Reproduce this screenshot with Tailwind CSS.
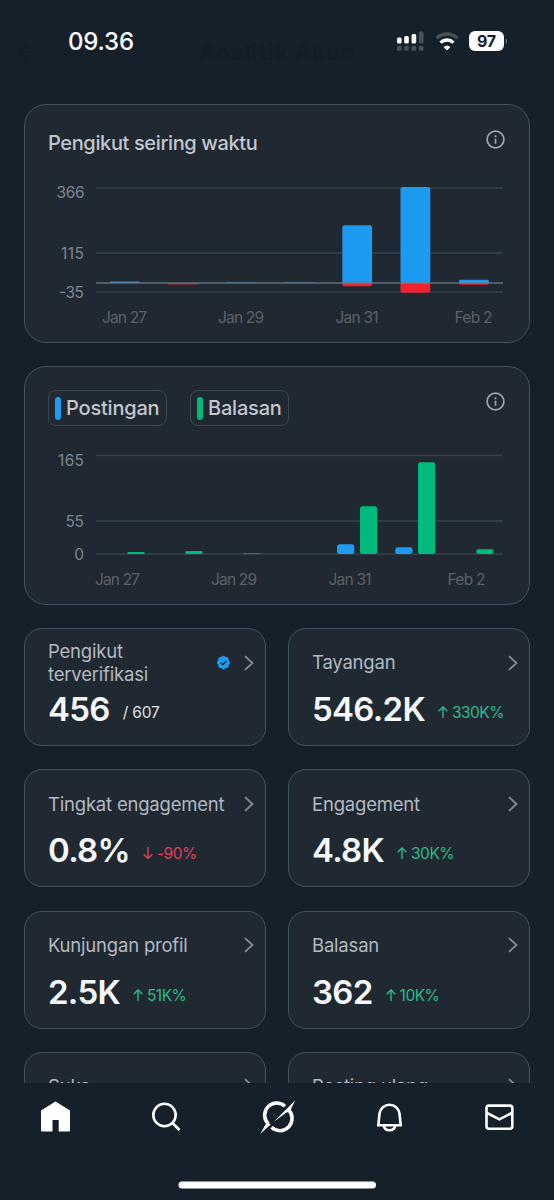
<!DOCTYPE html>
<html lang="id">
<head>
    <meta charset="UTF-8">
    <meta name="viewport" content="width=device-width, initial-scale=1.0">
    <title>Analitik Akun</title>
    <script src="https://cdn.jsdelivr.net/npm/@tailwindcss/browser@4"></script>
</head>
<body class="bg-[#16202a] font-['Inter',sans-serif] text-[#c2c7ce]">
    <div class="h-[1200px] w-[554px] overflow-hidden flex flex-col">
        <!-- Status bar -->
        <header class="relative h-[104px] shrink-0 flex items-start justify-between pl-[68px] pr-[46px] pt-[27px]">
            <svg class="absolute left-[17px] top-[42px]" width="22" height="20" viewBox="0 0 22 20" fill="none" stroke="#141d26" stroke-width="2"><path d="M10 2 2 10l8 8M2 10h18"/></svg>
            <div class="absolute left-[199px] top-[37px] text-[22px] leading-[30px] tracking-[1px] font-bold text-[#141d26]">Analitik Akun</div>
            <div class="relative text-[24px] leading-[30px] font-medium text-white tracking-[-0.2px]">09.36</div>
            <svg class="mt-[3px]" width="112" height="24" viewBox="396 30 112 24">
                <g fill="#fff">
                    <rect x="397" y="37.500" width="4.600" height="6" rx="1.500"/>
                    <rect x="404.200" y="36" width="4.600" height="7.500" rx="1.500"/>
                    <rect x="411.600" y="34" width="4.600" height="9.500" rx="1.500"/>
                </g>
                <g fill="#46505a">
                    <rect x="418.900" y="31.500" width="4.600" height="12" rx="1.500"/>
                    <rect x="397" y="45.800" width="4.600" height="5" rx="1.500"/>
                    <rect x="404.200" y="45.800" width="4.600" height="5" rx="1.500"/>
                    <rect x="411.600" y="45.800" width="4.600" height="5" rx="1.500"/>
                    <rect x="418.900" y="45.800" width="4.600" height="5" rx="1.500"/>
                </g>
                <g fill="none" stroke-width="3.300">
                    <path d="M436.600 38.200a15 15 0 0 1 20.800 0" stroke="#46505a"/>
                    <path d="M440.500 42.600a9.400 9.400 0 0 1 13 0" stroke="#fff"/>
                </g>
                <path d="M443.600 47.100a5 5 0 0 1 6.800 0L447 50.600z" fill="#fff"/>
                <rect x="469" y="31" width="35" height="20" rx="6" fill="#fff"/>
                <path d="M505.500 38.300c2.200.8 2.200 5.200 0 6z" fill="#5d666f"/>
                <text x="486.500" y="46.800" text-anchor="middle" font-size="16" font-weight="700" fill="#16202a" textLength="19">97</text>
            </svg>
        </header>

        <main class="px-6 flex-1 min-h-0 overflow-hidden flex flex-col gap-[23px]">
            <section class="h-[239px] shrink-0 rounded-[22px] border-[1.5px] border-[#43525f] bg-[#202832]">
                <div class="h-[65px] pl-[23px] pr-6 pt-[23px] flex items-start justify-between">
                    <h2 class="text-[20px] leading-[30px] font-medium tracking-[-0.37px]">Pengikut seiring waktu</h2>
                    <svg class="mt-[2px]" width="19" height="19" viewBox="0 0 19 19" fill="none" stroke="#9ea6af"><circle cx="9.500" cy="9.500" r="8.400" stroke-width="1.700"/><path d="M9.500 8.800v5M9.500 5.300v2" stroke-width="1.700"/></svg>
                </div>
                <svg class="block" width="504" height="172" viewBox="25 170 504 172" font-size="15.500">
                    <path d="M96 188H503M96 253H503M96 292H503" stroke="#35424f" stroke-width="1.600"/>
                    <g fill="#1d9bf0">
                        <rect x="342.300" y="225.200" width="29.800" height="58" rx="2.500"/>
                        <rect x="400.500" y="187" width="29.800" height="96" rx="2.500"/>
                        <rect x="459" y="279.700" width="29.800" height="4" rx="1.500"/>
                        <path d="M110 281.300h29.500v1.700H110z" opacity=".75"/>
                        <path d="M226 281.700h29.500v1H226zM284.500 281.700H314v1h-29.500z" opacity=".45"/>
                    </g>
                    <g fill="#f4212e">
                        <path d="M342.300 283h29.800v1.300a2 2 0 0 1-2 2h-25.800a2 2 0 0 1-2-2zM400.500 283h29.800v7.300a2.500 2.500 0 0 1-2.500 2.500H403a2.500 2.500 0 0 1-2.500-2.500zM459 283h29.800l-1 1.700h-27.800z"/>
                        <path d="M168 283h29.500v1.600H168z" opacity=".6"/>
                    </g>
                    <path d="M96 283H503" stroke="#71808e" stroke-width="1.600" opacity=".8"/>
                    <g fill="#7e8791" text-anchor="end">
                        <text x="84.500" y="198" textLength="28">366</text>
                        <text x="84" y="259" textLength="23">115</text>
                        <text x="84" y="298" textLength="25">-35</text>
                    </g>
                    <g fill="#5d6166" text-anchor="middle">
                        <text x="124.500" y="323" textLength="45">Jan 27</text>
                        <text x="241" y="323" textLength="46">Jan 29</text>
                        <text x="357" y="323" textLength="43">Jan 31</text>
                        <text x="473.500" y="323" textLength="38">Feb 2</text>
                    </g>
                </svg>
            </section>

            <section class="h-[239px] shrink-0 rounded-[22px] border-[1.5px] border-[#43525f] bg-[#202832]">
                <div class="h-[65px] pl-[23px] pr-6 pt-[23px] flex items-start gap-[23px] text-[20px] font-medium">
                    <div class="h-9 w-[119px] rounded-lg border border-[#3a4653] flex items-center gap-[5px] pl-[6px] tracking-[-0.2px]"><span class="h-[23px] w-[6px] rounded-full bg-[#1d9bf0]"></span>Postingan</div>
                    <div class="h-9 w-[99px] rounded-lg border border-[#3a4653] flex items-center gap-[5px] pl-[6px] tracking-[-0.2px]"><span class="h-[23px] w-[6px] rounded-full bg-[#00ba7c]"></span>Balasan</div>
                    <svg class="ml-auto mt-[2px]" width="19" height="19" viewBox="0 0 19 19" fill="none" stroke="#9ea6af"><circle cx="9.500" cy="9.500" r="8.400" stroke-width="1.700"/><path d="M9.500 8.800v5M9.500 5.300v2" stroke-width="1.700"/></svg>
                </div>
                <svg class="block" width="504" height="172" viewBox="25 432 504 172" font-size="15.500">
                    <path d="M96 455.500H503M96 521H503M96 554H503" stroke="#35424f" stroke-width="1.600"/>
                    <g fill="#1d9bf0">
                        <rect x="337" y="544.300" width="17.300" height="9.700" rx="2.500"/>
                        <rect x="395.300" y="547.300" width="17.300" height="6.700" rx="2.500"/>
                    </g>
                    <g fill="#00ba7c">
                        <rect x="360" y="506.200" width="17.300" height="47.800" rx="2.500"/>
                        <rect x="418" y="462.300" width="17.300" height="91.700" rx="2.500"/>
                        <rect x="476.300" y="549.200" width="17.300" height="4.800" rx="2"/>
                        <rect x="127.300" y="552" width="17.300" height="2" rx="1"/>
                        <rect x="185.300" y="551" width="17.300" height="3" rx="1.200"/>
                        <rect x="243.500" y="553" width="17.300" height="1" opacity=".6"/>
                    </g>
                    <g fill="#7e8791" text-anchor="end">
                        <text x="84" y="466" textLength="26">165</text>
                        <text x="84" y="527" textLength="18.500">55</text>
                        <text x="84" y="560">0</text>
                    </g>
                    <g fill="#5d6166" text-anchor="middle">
                        <text x="117.500" y="585" textLength="45">Jan 27</text>
                        <text x="234" y="585" textLength="46">Jan 29</text>
                        <text x="350" y="585" textLength="43">Jan 31</text>
                        <text x="466.500" y="585" textLength="38">Feb 2</text>
                    </g>
                </svg>
            </section>

            <!-- Metric cards -->
            <div id="metrics" class="grid grid-cols-2 gap-x-[22px] gap-y-[23.3px]"></div>
        </main>

        <nav class="h-[117px] shrink-0 bg-[#16202a]">
            <svg width="554" height="117" viewBox="0 1083 554 117" fill="none" stroke="#fff" stroke-width="2.600">
                <path d="M55.500 1101.500 70 1110.500V1130.500a1 1 0 0 1-1 1H58.700V1120h-6.200v11.500H42a1 1 0 0 1-1-1V1110.500z" fill="#fff" stroke="none"/>
                <circle cx="164.500" cy="1115" r="11.200"/>
                <path d="m172.500 1123 7 7"/>
                <g stroke-width="3.500">
                    <path d="M285 1106.300A12 12 0 0 0 268.500 1124"/>
                    <path d="M271.500 1127.300A12.200 12.200 0 0 0 288.500 1109.800"/>
                </g>
                <path d="M260.300 1133.800 266.800 1122.300l4 2.200zM273.800 1121.800 295.300 1100.200 289.800 1111.600 286.500 1112.400z" fill="#fff" stroke="none"/>
                <path d="M378.300 1125.300 379.500 1113.500a10.100 10.100 0 0 1 20 0L400.700 1125.300z"/>
                <path d="M383.700 1125.500a5.900 5.900 0 0 0 11.600 0"/>
                <rect x="486.500" y="1105.600" width="25.800" height="23.200" rx="2.500"/>
                <path d="m487 1113 12.400 6.300 12.400-6.300"/>
                <rect x="178.500" y="1181.500" width="197.500" height="7" rx="3.500" fill="#fff" stroke="none"/>
            </svg>
        </nav>
    </div>

    <script>
        const metrics = [
            { label: 'Pengikut<br>terverifikasi', value: '456', total: '607', verified: true },
            { label: 'Tayangan', value: '546.2K', change: '330K%' },
            { label: 'Tingkat engagement', value: '0.8%', change: '-90%', down: true },
            { label: 'Engagement', value: '4.8K', change: '30K%' },
            { label: 'Kunjungan profil', value: '2.5K', change: '51K%' },
            { label: 'Balasan', value: '362', change: '10K%' },
            { label: 'Suka' },
            { label: 'Posting ulang' },
        ];

        const badge = `<svg class="mr-[13px]" width="15" height="15" viewBox="0 0 22 22"><path fill="#1d9bf0" d="M20.400 11c0-1.400-.8-2.700-2-3.300.5-1.300.2-2.800-.8-3.800s-2.500-1.300-3.800-.8C13.200 1.800 12.200 1 11 1S8.600 1.800 8 3.100c-1.300-.5-2.800-.2-3.800.8S3 6.400 3.400 7.700C2.200 8.300 1.400 9.600 1.400 11s.8 2.700 2 3.300c-.4 1.300-.2 2.800.8 3.800s2.500 1.300 3.800.8c.6 1.300 1.700 2.100 3 2.100s2.400-.8 3-2.100c1.300.5 2.800.2 3.800-.8s1.300-2.500.8-3.800c1.100-.6 1.800-1.900 1.800-3.300z"/><path d="m6.800 11.200 3.100 3.100 5.300-5.900" fill="none" stroke="#202832" stroke-width="2"/></svg>`;

        function renderNumbers(m) {
            if (!m.value) return '';
            const arrow = m.down ? 'M5 0v11.500M.7 7.200 5 11.500l4.300-4.300' : 'M5 12V.9M.7 5.200 5 .9l4.300 4.300';
            const side = m.total
                ? `<span class="relative -top-[3px] ml-[13px] text-[15.5px] tracking-[-0.2px] text-[#dfe2e6]">/ ${m.total}</span>`
                : `<span class="relative -top-[3px] ml-[13px] flex items-baseline gap-1 text-[15.5px] tracking-[-0.5px] ${m.down ? 'text-[#e0405a]' : 'text-[#2bbd88]'}"><svg width="10" height="12" viewBox="0 0 10 12" fill="none" stroke="currentColor" stroke-width="1.400"><path d="${arrow}"/></svg>${m.change}</span>`;
            return `
                    <div class="mt-[2px] flex items-baseline">
                        <span class="text-[33px] leading-[44px] font-semibold tracking-[-0.7px] text-[#f5f8fa]">${m.value}</span>${side}
                    </div>`;
        }

        document.getElementById('metrics').innerHTML = metrics.map((m) => `
                <div class="h-[118px] rounded-[18px] border-[1.5px] border-[#43525f] bg-[#202832] pl-[23px] pr-[11px] pt-[11px]">
                    <div class="h-[45px] flex items-center">
                        <div class="flex-1 whitespace-nowrap text-[18.5px] leading-[22.5px] tracking-[-0.2px] text-[#b3b9c1]">${m.label}</div>
                        ${m.verified ? badge : ''}
                        <svg width="10" height="16" viewBox="0 0 10 16" fill="none" stroke="#87909a" stroke-width="1.700"><path d="m1 1.200 7.500 6.800L1 14.800"/></svg>
                    </div>${renderNumbers(m)}
                </div>`).join('');
    </script>
</body>
</html>
